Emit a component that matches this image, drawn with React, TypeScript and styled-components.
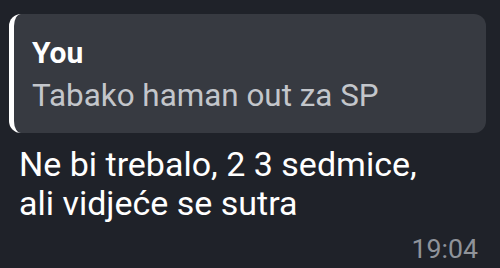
import styled, { createGlobalStyle } from "styled-components";

const GlobalStyle = createGlobalStyle`
    html, body {
        margin: 0;
        padding: 0;
        background: #1f2229;
    }
    body {
        font-family: Roboto, "Noto Sans", sans-serif;
    }
`;

const Bubble = styled.div`
    width: 500px;
    height: 268px;
    box-sizing: border-box;
    padding: 14px 14px 0 9px;
    display: flex;
    flex-direction: column;
    background: #1f2229;
`;

const Quote = styled.div`
    height: 119px;
    box-sizing: border-box;
    border-radius: 12px;
    border-left: 5px solid #ffffff;
    background: #373a41;
    padding: 19px 18px 0 18px;
    display: flex;
    flex-direction: column;
`;

const QuoteAuthor = styled.div`
    font-size: 30px;
    font-weight: 700;
    line-height: 40px;
    color: #ffffff;
`;

const QuoteText = styled.div`
    font-size: 31.4px;
    line-height: 46px;
    color: #c3c6cb;
`;

const Message = styled.div`
    margin-top: 12px;
    padding-left: 10px;
    font-size: 34px;
    line-height: 39px;
    color: #ffffff;
`;

const Time = styled.div`
    align-self: flex-end;
    margin-top: 11px;
    margin-right: 8px;
    font-size: 26.7px;
    line-height: 30px;
    color: #8f939a;
`;

export default function App() {
    return (
        <>
            <GlobalStyle />
            <Bubble>
                <Quote>
                    <QuoteAuthor>You</QuoteAuthor>
                    <QuoteText>Tabako haman out za SP</QuoteText>
                </Quote>
                <Message>
                    Ne bi trebalo, 2 3 sedmice,
                    <br />
                    ali vidjeće se sutra
                </Message>
                <Time>19:04</Time>
            </Bubble>
        </>
    );
}
